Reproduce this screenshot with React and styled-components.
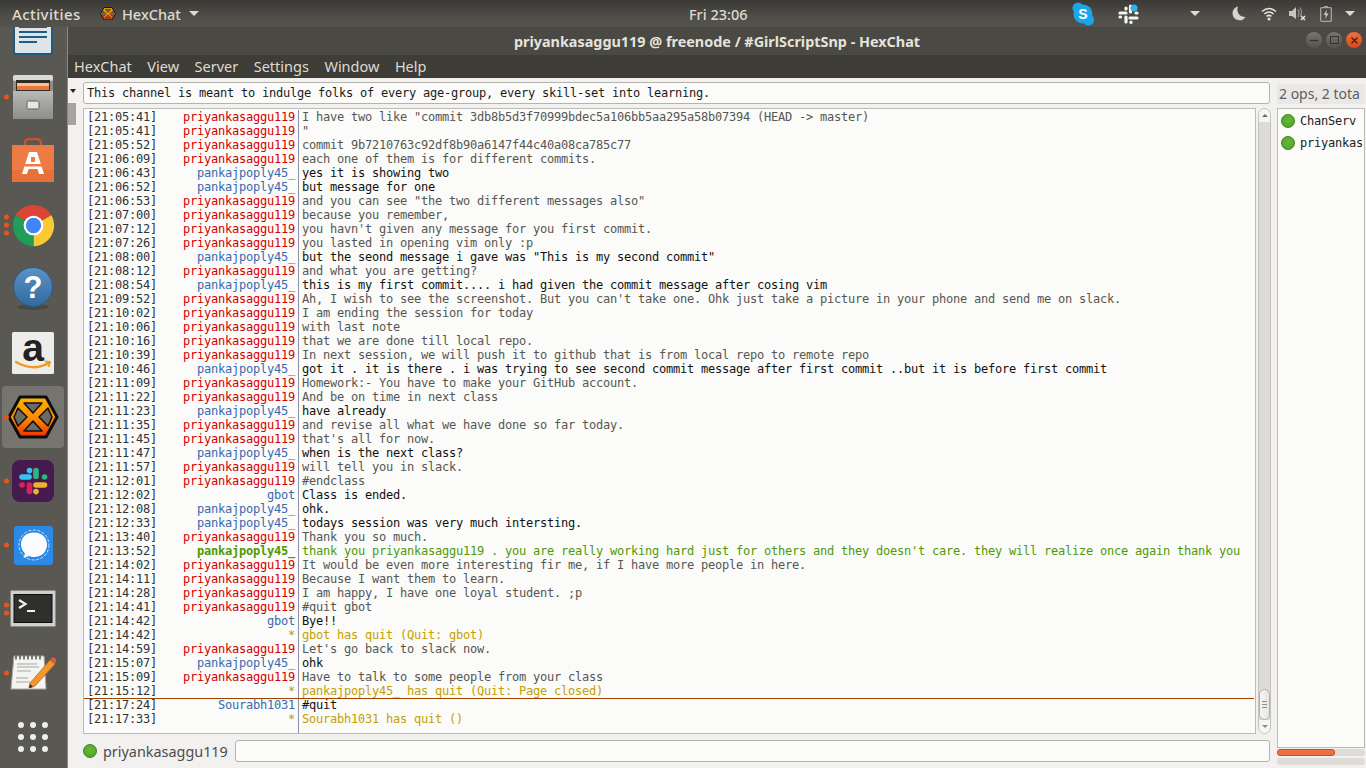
import React from "react";
import styled, { createGlobalStyle } from "styled-components";

const UI = `"Noto Sans", "Open Sans", sans-serif`;
const MONO = `"DejaVu Sans Mono", "Liberation Mono", monospace`;

const Global = createGlobalStyle`
  html, body { margin: 0; padding: 0; height: 100%; overflow: hidden; background: #f2f1f0; }
  #root { height: 100%; }
  * { box-sizing: border-box; }
`;

const ME = "priyankasaggu119";
const PJ = "pankajpoply45_";

const LOG = [
  ["21:05:41", ME, 'I have two like "commit 3db8b5d3f70999bdec5a106bb5aa295a58b07394 (HEAD -> master)'],
  ["21:05:41", ME, '"'],
  ["21:05:52", ME, "commit 9b7210763c92df8b90a6147f44c40a08ca785c77"],
  ["21:06:09", ME, "each one of them is for different commits."],
  ["21:06:43", PJ, "yes it is showing two"],
  ["21:06:52", PJ, "but message for one"],
  ["21:06:53", ME, 'and you can see "the two different messages also"'],
  ["21:07:00", ME, "because you remember,"],
  ["21:07:12", ME, "you havn't given any message for you first commit."],
  ["21:07:26", ME, "you lasted in opening vim only :p"],
  ["21:08:00", PJ, 'but the seond message i gave was "This is my second commit"'],
  ["21:08:12", ME, "and what you are getting?"],
  ["21:08:54", PJ, "this is my first commit.... i had given the commit message after cosing vim"],
  ["21:09:52", ME, "Ah, I wish to see the screenshot. But you can't take one. Ohk just take a picture in your phone and send me on slack."],
  ["21:10:02", ME, "I am ending the session for today"],
  ["21:10:06", ME, "with last note"],
  ["21:10:16", ME, "that we are done till local repo."],
  ["21:10:39", ME, "In next session, we will push it to github that is from local repo to remote repo"],
  ["21:10:46", PJ, "got it . it is there . i was trying to see second commit message after first commit ..but it is before first commit"],
  ["21:11:09", ME, "Homework:- You have to make your GitHub account."],
  ["21:11:22", ME, "And be on time in next class"],
  ["21:11:23", PJ, "have already"],
  ["21:11:35", ME, "and revise all what we have done so far today."],
  ["21:11:45", ME, "that's all for now."],
  ["21:11:47", PJ, "when is the next class?"],
  ["21:11:57", ME, "will tell you in slack."],
  ["21:12:01", ME, "#endclass"],
  ["21:12:02", "gbot", "Class is ended."],
  ["21:12:08", PJ, "ohk."],
  ["21:12:33", PJ, "todays session was very much intersting."],
  ["21:13:40", ME, "Thank you so much."],
  ["21:13:52", PJ, "thank you priyankasaggu119 . you are really working hard just for others and they doesn't care. they will realize once again thank you", "hilight"],
  ["21:14:02", ME, "It would be even more interesting fir me, if I have more people in here."],
  ["21:14:11", ME, "Because I want them to learn."],
  ["21:14:28", ME, "I am happy, I have one loyal student. ;p"],
  ["21:14:41", ME, "#quit gbot"],
  ["21:14:42", "gbot", "Bye!!"],
  ["21:14:42", "*", "gbot has quit (Quit: gbot)", "system"],
  ["21:14:59", ME, "Let's go back to slack now."],
  ["21:15:07", PJ, "ohk"],
  ["21:15:09", ME, "Have to talk to some people from your class"],
  ["21:15:12", "*", "pankajpoply45_ has quit (Quit: Page closed)", "system"],
  ["21:17:24", "Sourabh1031", "#quit", "", true],
  ["21:17:33", "*", "Sourabh1031 has quit ()", "system"],
];

const nickColor = (nick, kind) => {
  if (kind === "hilight") return "#4e9a06";
  if (nick === ME) return "#d40000";
  if (nick === "*") return "#c4a000";
  return "#3a69b0";
};
const msgColor = (nick, kind) => {
  if (kind === "hilight") return "#4e9a06";
  if (kind === "system") return "#c4a000";
  if (nick === ME) return "#555753";
  return "#111111";
};

const Screen = styled.div`
  width: 1366px;
  height: 768px;
  display: flex;
  flex-direction: column;
  overflow: hidden;
`;

const TopBar = styled.header`
  height: 27px;
  flex: none;
  display: flex;
  align-items: center;
  background: linear-gradient(#3a3935, #4f4d48 60%, #55534e);
  color: #dfdbd2;
  font: 500 14.5px ${UI};
  padding-left: 12px;
`;
const Activities = styled.span`
  width: 88px;
  font-size: 15px;
  letter-spacing: 0.4px;
  white-space: nowrap;
`;
const AppName = styled.span`
  display: flex;
  align-items: center;
  gap: 6px;
`;
const Caret = styled.i`
  display: block;
  width: 0;
  height: 0;
  border-left: 5px solid transparent;
  border-right: 5px solid transparent;
  border-top: 5px solid #dfdbd2;
  margin-left: ${(p) => p.$ml || 0}px;
`;
const Clock = styled.span`
  margin-left: 490px;
  width: 60px;
  white-space: nowrap;
`;
const Tray = styled.div`
  margin-left: 323px;
  display: flex;
  align-items: center;
`;

const Body = styled.div`
  flex: 1;
  display: flex;
  min-height: 0;
`;

const Dock = styled.nav`
  width: 68px;
  flex: none;
  background: #5a5852;
  border-right: 1px solid #8a8984;
  overflow: hidden;
  display: flex;
  flex-direction: column;
  align-items: center;
`;
const DockItem = styled.div`
  position: relative;
  width: 62px;
  height: 62px;
  margin: 1px 0 1px -1px;
  flex: none;
  display: flex;
  align-items: center;
  justify-content: center;
  border-radius: 4px;
  background: ${(p) => (p.$active ? "rgba(255,255,255,0.17)" : "transparent")};
  &:first-child { margin-top: -25px; }
`;
const Pips = styled.div`
  position: absolute;
  left: 2px;
  top: 50%;
  transform: translateY(-50%);
  display: flex;
  flex-direction: column;
  gap: 3px;
`;
const Pip = styled.i`
  display: block;
  width: 5px;
  height: 5px;
  border-radius: 50%;
  background: #e95420;
`;

const Win = styled.main`
  flex: 1;
  min-width: 0;
  display: flex;
  flex-direction: column;
`;
const TitleBar = styled.div`
  height: 28px;
  flex: none;
  background: #4b4944;
  color: #e6e3dc;
  font: 700 14.4px ${UI};
  display: flex;
  align-items: center;
  justify-content: center;
  position: relative;
`;
const WinButtons = styled.div`
  position: absolute;
  right: 4px;
  top: 5px;
  display: flex;
  gap: 4px;
`;
const WinButton = styled.span`
  width: 16px;
  height: 16px;
  border-radius: 50%;
  background: ${(p) => (p.$close ? "linear-gradient(#f0703f,#d9481c)" : "linear-gradient(#77756f,#54524d)")};
  display: flex;
  align-items: center;
  justify-content: center;
`;
const MenuBar = styled.div`
  height: 23px;
  flex: none;
  background: #3d3c37;
  color: #dfdbd2;
  font: 400 14.5px/22px ${UI};
  display: flex;
  align-items: flex-start;
  padding-left: 6px;
  gap: 15.5px;
`;
const MenuItem = styled.span`
  white-space: nowrap;
`;

const Content = styled.div`
  flex: 1;
  min-height: 0;
  display: flex;
  background: #f2f1f0;
`;
const Gutter = styled.div`
  width: 9px;
  flex: none;
  margin-right: 6px;
  display: flex;
  flex-direction: column;
  align-items: flex-start;
`;
const GutterArrow = styled.i`
  display: block;
  margin-top: 11px;
  margin-left: 2px;
  width: 0;
  height: 0;
  border-left: 3px solid transparent;
  border-right: 3px solid transparent;
  border-top: 4px solid #222;
`;
const GutterThumb = styled.div`
  margin-top: 10px;
  width: 8px;
  height: 22px;
  background: #a5a4a1;
`;

const Center = styled.div`
  width: 1188px;
  flex: none;
  display: flex;
  flex-direction: column;
`;
const Topic = styled.div`
  margin: 4px 1px 0 0;
  height: 22px;
  background: #fbfbfa;
  border: 1px solid #b5b3ae;
  border-radius: 3px;
  display: flex;
  align-items: center;
  padding-left: 3px;
  font: 12px ${MONO};
  letter-spacing: -0.224px;
  color: #1a1a1a;
  white-space: nowrap;
`;
const ChatRow = styled.div`
  margin-top: 4px;
  height: 626px;
  display: flex;
  gap: 2px;
`;
const Log = styled.div`
  width: 1173px;
  flex: none;
  background: #fbfbf9;
  border: 1px solid #bdbbb6;
  padding-top: 1px;
  display: flex;
  flex-direction: column;
  font: 12px/14px ${MONO};
  letter-spacing: -0.224px;
  overflow: hidden;
`;
const Line = styled.div`
  display: grid;
  grid-template-columns: 214px 1fr;
  height: ${(p) => (p.$fill ? "auto" : "14px")};
  flex: ${(p) => (p.$fill ? 1 : "none")};
  position: relative;
  white-space: pre;
`;
const Marker = styled.div`
  position: absolute;
  left: 0;
  right: 1px;
  top: 0;
  height: 1px;
  background: #a04400;
`;
const Stamp = styled.span`
  color: #2e3436;
  padding-left: 3px;
  display: flex;
  justify-content: space-between;
  padding-right: 3px;
`;
const Nick = styled.b`
  font-weight: ${(p) => (p.$bold ? 700 : 400)};
  color: ${(p) => p.$color};
`;
const Msg = styled.span`
  border-left: 1px solid #8f8fa8;
  padding-left: 3px;
  color: ${(p) => p.$color};
`;

const ScrollBar = styled.div`
  width: 13px;
  flex: none;
  border: 1px solid #c4c2bd;
  border-radius: 7px;
  background: #dcdbd8;
  display: flex;
  flex-direction: column;
  align-items: center;
  overflow: hidden;
`;
const ScrollCap = styled.div`
  height: 13px;
  width: 100%;
  flex: none;
  background: #f6f5f4;
  display: flex;
  align-items: center;
  justify-content: center;
`;
const ScrollArrow = styled.i`
  display: block;
  width: 0;
  height: 0;
  border-left: 3px solid transparent;
  border-right: 3px solid transparent;
  ${(p) => (p.$up ? "border-bottom: 3px solid #6a6a66;" : "border-top: 3px solid #8a8a86;")}
`;
const ScrollSpace = styled.div`
  flex: 1;
`;
const ScrollThumb = styled.div`
  width: 11px;
  height: 31px;
  flex: none;
  border: 1px solid #b2b0ab;
  border-radius: 6px;
  background: linear-gradient(90deg, #f7f6f5, #e6e5e3);
  display: flex;
  flex-direction: column;
  align-items: center;
  justify-content: center;
  gap: 2px;
`;
const Grip = styled.i`
  display: block;
  width: 5px;
  height: 1px;
  background: #8e8d89;
`;

const InputRow = styled.div`
  margin: 5px 1px 0 0;
  display: flex;
  align-items: center;
  height: 24px;
`;
const NickName = styled.span`
  font: 400 14.4px ${UI};
  color: #4c4c4c;
  margin-left: 6px;
  width: 132px;
  flex: none;
  white-space: nowrap;
`;
const Dot = styled.i`
  display: block;
  flex: none;
  width: 14px;
  height: 14px;
  border-radius: 50%;
  background: radial-gradient(circle at 50% 40%, #66b83a, #4ea020);
  border: 1px solid #3f7f1f;
`;
const InputBox = styled.div`
  flex: 1;
  height: 22px;
  background: #fbfbfa;
  border: 1px solid #b5b3ae;
  border-radius: 3px;
`;

const Side = styled.aside`
  margin-left: 6px;
  width: 88px;
  flex: none;
  display: flex;
  flex-direction: column;
`;
const OpCount = styled.div`
  margin-top: 6px;
  height: 20px;
  background: #e9e8e6;
  font: 400 14px/20px ${UI};
  color: #5e5c64;
  padding-left: 2px;
  white-space: nowrap;
  overflow: hidden;
`;
const UserList = styled.div`
  margin-top: 4px;
  width: 88px;
  height: 640px;
  border: 1px solid #bdbbb6;
  background: #fbfbf9;
  padding-top: 5px;
  display: flex;
  flex-direction: column;
  gap: 8px;
`;
const User = styled.div`
  display: flex;
  align-items: center;
  gap: 5px;
  padding-left: 3px;
  height: 14px;
  font: 12px ${MONO};
  letter-spacing: -0.224px;
  color: #222;
  white-space: nowrap;
`;
const LagBar = styled.div`
  margin-top: ${(p) => p.$mt}px;
  height: 7px;
  border-radius: 3px;
  background: #dedcd9;
  overflow: hidden;
`;
const LagFill = styled.div`
  height: 100%;
  border-radius: 3px;
  border: 1px solid #c2502a;
  background: #ec6f42;
`;

const HexIcon = ({ size = 52 }) => (
  <svg width={size} height={size * 0.85} viewBox="0 0 52 44">
    <defs>
      <linearGradient id={`hx${size}`} x1="0" y1="0" x2="0" y2="1">
        <stop offset="0" stopColor="#fdb400" />
        <stop offset="0.55" stopColor="#f98a00" />
        <stop offset="1" stopColor="#f22c00" />
      </linearGradient>
    </defs>
    <path d="M13 2 H39 L50 22 L39 42 H13 L2 22 Z" fill={`url(#hx${size})`} stroke="#0c0c0c" strokeWidth="3" strokeLinejoin="round" />
    <path d="M17 8 H35 L26 18 Z M17 36 H35 L26 26 Z M11 13 L20 22 L11 31 L7 22 Z M41 13 L32 22 L41 31 L45 22 Z" fill="#6d6a66" stroke="#111" strokeWidth="1.5" strokeLinejoin="round" />
  </svg>
);

const WriterIcon = () => (
  <svg width="40" height="44" viewBox="0 0 40 44">
    <rect x="1" y="-10" width="38" height="53" rx="2" fill="#dde5e9" stroke="#1f5a80" strokeWidth="2" />
    <path d="M19 3 H34 V12 H19 Z" fill="#a9bcc8" />
    <path d="M21 12 L25 6 L28 9 L31 6 L34 12 Z" fill="#7f97a6" />
    <path d="M6 16h28M6 21h28M6 26h28M6 31h18M6 4h10M6 8h10M6 12h10" stroke="#235c82" strokeWidth="2" />
  </svg>
);
const FilesIcon = () => (
  <svg width="42" height="46" viewBox="0 0 42 46">
    <defs>
      <linearGradient id="fl" x1="0" y1="0" x2="0" y2="1">
        <stop offset="0" stopColor="#b9b9b7" />
        <stop offset="1" stopColor="#8d8d8b" />
      </linearGradient>
    </defs>
    <rect x="1" y="1" width="40" height="44" rx="2" fill="#8f8f8d" />
    <rect x="1" y="1" width="40" height="6" rx="2" fill="#d8d8d6" />
    <rect x="4" y="6" width="34" height="12" fill="#2f2b27" />
    <rect x="5" y="9" width="32" height="3" fill="#f7c38e" />
    <rect x="5" y="12" width="32" height="4" fill="#e8783c" />
    <path d="M1 17 H41 V45 H1 Z" fill="url(#fl)" />
    <rect x="15" y="27" width="12" height="8" rx="1.5" fill="#e6e6e4" stroke="#5e5e5c" />
  </svg>
);
const ShopIcon = () => (
  <svg width="42" height="46" viewBox="0 0 42 46">
    <path d="M13 10 V5 a4 4 0 0 1 4 -4 h8 a4 4 0 0 1 4 4 v5" fill="none" stroke="#c9562a" strokeWidth="2.4" />
    <path d="M0 7 H42 V44 H0 Z" fill="#ee7a44" />
    <path d="M0 32 H42 V44 H0 Z" fill="#e8703b" />
    <path d="M17 14 H25 L32 36 H27 L25.5 31 H16.5 L15 36 H10 Z" fill="#fff" />
    <rect x="12" y="26" width="18" height="2.5" fill="#ee7a44" />
    <rect x="19" y="19" width="4" height="5" fill="#ee7a44" />
  </svg>
);
const ChromeIcon = () => (
  <svg width="45" height="45" viewBox="0 0 48 48">
    <path d="M24 24 L5 13 A22 22 0 0 1 43 13 Z" fill="#db4437" />
    <path d="M24 24 L43 13 A22 22 0 0 1 24 46 Z" fill="#fcc934" />
    <path d="M24 24 L24 46 A22 22 0 0 1 5 13 Z" fill="#1e9e57" />
    <circle cx="24" cy="24" r="10.5" fill="#fff" />
    <circle cx="24" cy="24" r="8.2" fill="#4285f4" />
  </svg>
);
const HelpIcon = () => (
  <svg width="40" height="44" viewBox="0 0 40 44">
    <defs>
      <linearGradient id="hp" x1="0" y1="0" x2="0" y2="1">
        <stop offset="0" stopColor="#5c93c4" />
        <stop offset="1" stopColor="#2f6aa0" />
      </linearGradient>
    </defs>
    <ellipse cx="20" cy="40" rx="16" ry="3" fill="#4a4844" />
    <circle cx="20" cy="20" r="19.5" fill="url(#hp)" stroke="#2a5b88" />
    <text x="20" y="31" textAnchor="middle" fontFamily="Liberation Sans, sans-serif" fontWeight="700" fontSize="31" fill="#fff">?</text>
  </svg>
);
const AmazonIcon = () => (
  <svg width="42" height="60" viewBox="0 -9 42 60">
    <rect width="42" height="42" rx="1.5" fill="#ededec" />
    <text x="21" y="29" textAnchor="middle" fontFamily="Liberation Sans, sans-serif" fontWeight="700" fontSize="39" fill="#222">a</text>
    <path d="M4 30 Q21 40 37 31" fill="none" stroke="#f39a1e" strokeWidth="2.4" strokeLinecap="round" />
    <path d="M33 29.5 L38 30 L36.5 35" fill="none" stroke="#f39a1e" strokeWidth="1.8" />
  </svg>
);
const SlackDock = () => (
  <svg width="42" height="42" viewBox="0 0 42 42">
    <rect width="42" height="42" rx="8" fill="#451a4e" />
    <g fill="none" strokeWidth="5.6" strokeLinecap="round">
      <path d="M10 17 H17" stroke="#36c5f0" />
      <path d="M17.5 10.5 V10.6" stroke="#36c5f0" />
      <path d="M24 10.5 V16.5" stroke="#2eb67d" />
      <path d="M32.5 17 H32.6" stroke="#2eb67d" />
      <path d="M24 25 H32.5" stroke="#ecb22e" />
      <path d="M24 31.5 V31.6" stroke="#ecb22e" />
      <path d="M17.5 25 V31.5" stroke="#e01e5a" />
      <path d="M10 25 H10.1" stroke="#e01e5a" />
    </g>
  </svg>
);
const SignalIcon = () => (
  <svg width="39" height="39" viewBox="0 0 39 39">
    <rect width="39" height="39" rx="3" fill="#2b8ae6" />
    <circle cx="20" cy="19" r="15" fill="none" stroke="#cfe4fa" strokeWidth="1" strokeDasharray="3 1.6" />
    <path d="M20 6.5 C11.5 6.5 7 12 7 18.5 C7 22.5 9 25.5 11 27.5 L9.5 32 L15 30 C16.5 30.6 18 31 20 31 C28 31 33 25.5 33 18.5 C33 12 28 6.5 20 6.5 Z" fill="#fafcff" />
  </svg>
);
const TerminalIcon = () => (
  <svg width="46" height="38" viewBox="0 0 46 38">
    <rect x="0.5" y="0.5" width="45" height="36" rx="1" fill="#cfcfcd" stroke="#8b8b88" />
    <rect x="4" y="4.5" width="38" height="28" fill="#2f2f2d" stroke="#0e0e0e" />
    <path d="M9 10 L15.5 14 L9 18" fill="none" stroke="#f0f0ee" strokeWidth="2.2" />
    <rect x="17" y="20" width="8" height="2" fill="#f0f0ee" />
  </svg>
);
const EditorIcon = () => (
  <svg width="46" height="40" viewBox="0 0 46 40">
    <path d="M4 3 H34 L36 36 H1 Z" fill="#f4f4f2" stroke="#a9a9a6" />
    <path d="M6 2.5 v4 M10 2.5 v4 M14 2.5 v4 M18 2.5 v4 M22 2.5 v4 M26 2.5 v4 M30 2.5 v4" stroke="#55554f" strokeWidth="1.5" />
    <path d="M7 11h20M7 14h22M7 18h14M6 25h12M6 29h14" stroke="#a5a5a0" strokeWidth="1" />
    <path d="M20 30 L40 7 L45 11 L25 33 L19 35 Z" fill="#f3982e" stroke="#b96d13" strokeWidth="0.8" />
    <path d="M40 7 L42 4.5 Q44 3.5 46 6 Q46.5 8 45 11 Z" fill="#e2553f" />
    <path d="M20 31 L19 35 L23 34 Z" fill="#2a2a28" />
  </svg>
);
const GridIcon = () => (
  <svg width="32" height="32" viewBox="0 0 32 32" fill="#eeeeec">
    {[4, 16, 28].flatMap((y) =>
      [4, 16, 28].map((x) => <circle key={`${x}-${y}`} cx={x} cy={y} r="3" />)
    )}
  </svg>
);

const SkypeIcon = () => (
  <svg width="22" height="24" viewBox="0 0 22 24" style={{ display: "block" }}>
    <circle cx="6" cy="6" r="5.5" fill="#1aa7e8" />
    <circle cx="16.5" cy="18" r="5.5" fill="#1aa7e8" />
    <circle cx="11" cy="12" r="9.5" fill="#1aa7e8" />
    <text x="11" y="17" textAnchor="middle" fontFamily="Liberation Sans, sans-serif" fontWeight="700" fontSize="14" fill="#fff">S</text>
  </svg>
);
const SlackTray = () => (
  <svg width="22" height="22" viewBox="0 0 22 22" style={{ display: "block" }}>
    <g stroke="#f4f4f2" strokeWidth="3.2" strokeLinecap="round" fill="none">
      <path d="M2 10 H8" />
      <path d="M12.5 3 V9" />
      <path d="M12 15 H19" />
      <path d="M8 14 V19" />
      <path d="M8 5 V6" />
      <path d="M2 14 H2.5" />
      <path d="M18 10 H19" />
      <path d="M13 19 V19.5" />
    </g>
    <circle cx="16" cy="5" r="3.5" fill="#2db2e8" />
  </svg>
);
const MoonIcon = () => (
  <svg width="14" height="15" viewBox="0 0 14 15" style={{ display: "block" }}>
    <path d="M6 0.5 A7 7 0 1 0 13.5 11 A7.5 7.5 0 0 1 6 0.5 Z" fill="#d8d5ce" />
  </svg>
);
const WifiIcon = () => (
  <svg width="16" height="14" viewBox="0 0 16 14" style={{ display: "block" }} fill="none" stroke="#e6e3dc" strokeWidth="1.6">
    <path d="M1 4.5 Q8 -1.5 15 4.5" />
    <path d="M3.4 7 Q8 3 12.6 7" />
    <path d="M5.6 9.4 Q8 7.4 10.4 9.4" />
    <circle cx="8" cy="12" r="1.5" fill="#e6e3dc" stroke="none" />
  </svg>
);
const VolumeIcon = () => (
  <svg width="17" height="15" viewBox="0 0 17 15" style={{ display: "block" }}>
    <path d="M0 5 H3 L7 1 V13 L3 10 H0 Z" fill="#c8c5be" />
    <path d="M9 3 Q11 7 9 11 M11 1.5 Q14 6.5 11.5 10" fill="none" stroke="#8f8c86" strokeWidth="1.3" />
    <path d="M12 10 L16 14 M16 10 L12 14" stroke="#e6e3dc" strokeWidth="1.5" />
  </svg>
);
const BatteryIcon = () => (
  <svg width="12" height="16" viewBox="0 0 12 16" style={{ display: "block" }}>
    <rect x="4" y="0" width="4" height="2" fill="#a8a59e" />
    <rect x="0.7" y="1.7" width="10.6" height="13.6" rx="1" fill="none" stroke="#a8a59e" strokeWidth="1.3" />
    <path d="M7 3.5 L3.5 9 H5.8 L5 13 L8.7 7.5 H6.3 Z" fill="#c8c5be" />
  </svg>
);
const TrayIcon = styled.span`
  display: block;
  margin-left: ${(p) => p.$ml}px;
`;

const DOCK = [
  { icon: <WriterIcon />, pips: 0 },
  { icon: <FilesIcon />, pips: 1 },
  { icon: <ShopIcon />, pips: 0 },
  { icon: <ChromeIcon />, pips: 3 },
  { icon: <HelpIcon />, pips: 0 },
  { icon: <AmazonIcon />, pips: 0 },
  { icon: <HexIcon />, pips: 1, active: true },
  { icon: <SlackDock />, pips: 1 },
  { icon: <SignalIcon />, pips: 1 },
  { icon: <TerminalIcon />, pips: 2 },
  { icon: <EditorIcon />, pips: 1 },
  { icon: <GridIcon />, pips: 0 },
];

export default function App() {
  return (
    <Screen>
      <Global />
      <TopBar>
        <Activities>Activities</Activities>
        <AppName>
          <HexIcon size={16} />
          HexChat
          <Caret $ml={2} />
        </AppName>
        <Clock>Fri 23:06</Clock>
        <Tray>
          <SkypeIcon />
          <TrayIcon $ml={24}><SlackTray /></TrayIcon>
          <Caret $ml={50} />
          <TrayIcon $ml={32}><MoonIcon /></TrayIcon>
          <TrayIcon $ml={15}><WifiIcon /></TrayIcon>
          <TrayIcon $ml={12}><VolumeIcon /></TrayIcon>
          <TrayIcon $ml={14}><BatteryIcon /></TrayIcon>
          <Caret $ml={13} />
        </Tray>
      </TopBar>
      <Body>
        <Dock>
          {DOCK.map((d, i) => (
            <DockItem key={i} $active={d.active}>
              {d.pips > 0 && (
                <Pips>
                  {Array.from({ length: d.pips }).map((_, j) => <Pip key={j} />)}
                </Pips>
              )}
              {d.icon}
            </DockItem>
          ))}
        </Dock>
        <Win>
          <TitleBar>
            priyankasaggu119 @ freenode / #GirlScriptSnp - HexChat
            <WinButtons>
              <WinButton>
                <svg width="8" height="8" viewBox="0 0 8 8"><path d="M0 4.5 H8" stroke="#35342f" strokeWidth="1.3" /></svg>
              </WinButton>
              <WinButton>
                <svg width="9" height="8" viewBox="0 0 9 8"><rect x="0.5" y="0.5" width="8" height="7" fill="none" stroke="#35342f" /></svg>
              </WinButton>
              <WinButton $close>
                <svg width="7" height="7" viewBox="0 0 7 7"><path d="M0.5 0.5 L6.5 6.5 M6.5 0.5 L0.5 6.5" stroke="#4a1a08" strokeWidth="1.2" /></svg>
              </WinButton>
            </WinButtons>
          </TitleBar>
          <MenuBar>
            <MenuItem>HexChat</MenuItem>
            <MenuItem>View</MenuItem>
            <MenuItem>Server</MenuItem>
            <MenuItem>Settings</MenuItem>
            <MenuItem>Window</MenuItem>
            <MenuItem>Help</MenuItem>
          </MenuBar>
          <Content>
            <Gutter>
              <GutterArrow />
              <GutterThumb />
            </Gutter>
            <Center>
              <Topic>This channel is meant to indulge folks of every age-group, every skill-set into learning.</Topic>
              <ChatRow>
                <Log>
                  {LOG.map(([time, nick, text, kind, mark], i) => (
                    <Line key={i}>
                      {mark && <Marker />}
                      <Stamp>
                        [{time}]
                        <Nick $color={nickColor(nick, kind)} $bold={kind === "hilight"}>{nick}</Nick>
                      </Stamp>
                      <Msg $color={msgColor(nick, kind)}>{text}</Msg>
                    </Line>
                  ))}
                  <Line $fill>
                    <span />
                    <Msg />
                  </Line>
                </Log>
                <ScrollBar>
                  <ScrollCap><ScrollArrow $up /></ScrollCap>
                  <ScrollSpace />
                  <ScrollThumb><Grip /><Grip /><Grip /></ScrollThumb>
                  <ScrollCap><ScrollArrow /></ScrollCap>
                </ScrollBar>
              </ChatRow>
              <InputRow>
                <Dot />
                <NickName>priyankasaggu119</NickName>
                <InputBox />
              </InputRow>
            </Center>
            <Side>
              <OpCount>2 ops, 2 tota</OpCount>
              <UserList>
                <User><Dot />ChanServ</User>
                <User><Dot />priyankas</User>
              </UserList>
              <LagBar $mt={1}><LagFill style={{ width: "66%" }} /></LagBar>
              <LagBar $mt={2} />
            </Side>
          </Content>
        </Win>
      </Body>
    </Screen>
  );
}
